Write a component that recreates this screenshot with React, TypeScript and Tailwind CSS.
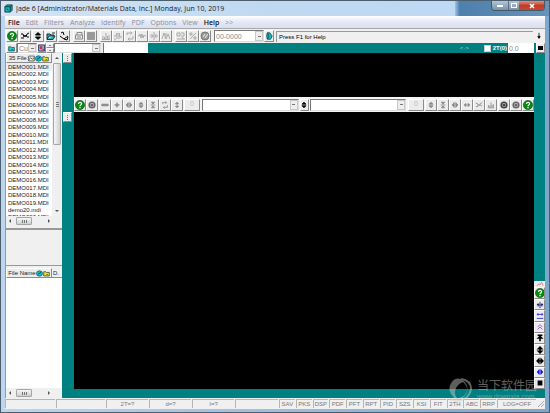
import React from 'react';
import clsx from 'clsx';

interface GlyphProps {
  d: string;
  color?: string;
  size?: string;
}

// 10x10 line glyph shared by every toolbar
const Glyph: React.FC<GlyphProps> = ({ d, color = 'text-black', size = 'size-[10px]' }) => (
  <svg viewBox="0 0 10 10" className={clsx('shrink-0', size, color)} fill="none" stroke="currentColor" aria-hidden="true">
    <path d={d} />
  </svg>
);

const HelpGlyph = () => (
  <svg viewBox="0 0 10 10" className="size-[10px] shrink-0" fill="none" aria-hidden="true">
    <circle cx="5" cy="5" r="4.6" fill="#078a12" stroke="#045008" strokeWidth="0.6" />
    <path d="M3.5 3.9C3.5 1.9 6.6 1.9 6.6 3.8C6.6 5 5 4.9 5 6.2M5 7V8.2" stroke="white" strokeWidth="1.2" />
  </svg>
);

const FolderGlyph = ({ fill }: { fill: string }) => (
  <svg viewBox="0 0 10 10" className="size-[7px] shrink-0" aria-hidden="true">
    <path d="M1 2.5H4L5 3.5H9V8.5H1Z" fill={fill} stroke="#1d3a3a" />
    <path d="M5 6.5H7" stroke="#1d3a3a" />
  </svg>
);

const DiscGlyph = () => (
  <svg viewBox="0 0 10 10" className="size-[7px] shrink-0" aria-hidden="true">
    <ellipse cx="5" cy="5" rx="4.4" ry="3.8" fill="#08c4cf" stroke="#07565f" />
    <path d="M3 6L7 3.5" stroke="#063b50" strokeWidth="1.4" />
  </svg>
);

const PictureGlyph = () => (
  <svg viewBox="0 0 10 10" className="size-[7px] shrink-0" fill="none" aria-hidden="true">
    <path d="M1 1.5H9V8.5H1ZM1 7L4 4L6 6L9 4" stroke="#333" />
  </svg>
);

const glyphs = {
  wave: 'M1 3H3L4 6L5 4L6 6L7 3L9 2M1 7H4M7 6H9',
  updown: 'M2.5 4L5 1.5L7.5 4ZM2.5 6L5 8.5L7.5 6Z',
  print: 'M3 4V1.5H8V4M1.5 4H8.5V8H1.5ZM3 6H7',
  save: 'M1.5 1.5H8.5V8.5H1.5ZM2 3H8M2 4.5H8M2 6H8M2 7.5H8',
  peaks: 'M1 8.5H9M2 8V5M3.5 8V6M5 8V2M6.5 8V5M8 8V4',
  peakLeft: 'M1 5H3L4 2V8M6 8V2L7 6H9M1 8H3',
  cycle: 'M2 4V2H7M5.5 0.5L7 2L5.5 3.5M8 5V8H3M4.5 6.5L3 8L4.5 9.5',
  zigzag: 'M1 5H2L3 3L4 7L5 3L6 7L7 4L8 5H9',
  spread: 'M1 5H4L2.5 3M2.5 7L4 5M9 5H6L7.5 3M7.5 7L6 5M5 1V9',
  bell: 'M1 8L3 2L5 8L7 3L9 8M5 2V5',
  search: 'M1 2H4V5H1ZM5 2H8V5H5M1 8H9M6 6L8 8',
  percent: 'M2 8L8 2M2 2H4V4H2ZM6 6H8V8H6Z',
  ring: 'M5 1.5A3.5 3.5 0 1 0 5 8.5A3.5 3.5 0 1 0 5 1.5M5 4A1 1 0 1 0 5 6A1 1 0 1 0 5 4',
  minus: 'M1 4H9V6H1Z',
  plus: 'M2 4.5H8M2 5.5H8M4.5 2V8M5.5 2V8',
  sides: 'M4 2L1.5 5L4 8ZM6 2L8.5 5L6 8Z',
  shrink: 'M3 1.5H7L5 4ZM3 8.5H7L5 6ZM2 5H8',
  top: 'M2 1.5H8M5 9V3M3 5L5 3L7 5Z',
  tall: 'M5 2V8M3 3.5L5 1.5L7 3.5ZM3 6.5L5 8.5L7 6.5Z',
  wide: 'M2 5H8M3.5 3L1.5 5L3.5 7ZM6.5 3L8.5 5L6.5 7Z',
};

const bevel =
  'flex shrink-0 items-center justify-center overflow-hidden border border-t-white border-l-white border-r-[#8b8b8b] border-b-[#8b8b8b] bg-[#ececec]';

interface ToolProps {
  label: string;
  className?: string;
  children?: React.ReactNode;
}

const Tool: React.FC<ToolProps> = ({ label, className = 'h-3 w-3', children }) => (
  <button type="button" aria-label={label} className={clsx(bevel, className)}>
    {children}
  </button>
);

const Combo = ({ label, value = '', className }: { label: string; value?: string; className: string }) => (
  <span className={clsx('relative flex border border-t-[#777] border-l-[#777] border-r-[#ddd] border-b-[#ddd] bg-white', className)}>
    <select aria-label={label} className="w-full appearance-none bg-transparent pl-px text-[7px] leading-none text-[#888] outline-none">
      <option>{value}</option>
    </select>
    <span className="pointer-events-none absolute inset-y-0 right-0 flex w-2 items-center justify-center border border-[#c8c8c8] bg-[#eee]">
      <span className="h-px w-[3px] bg-[#777]" />
    </span>
  </span>
);

const TitleBar = () => (
  <header className="flex h-[15px] shrink-0 items-center bg-linear-to-r from-[#d5e3f2] via-[#bfd9f1] to-[#bcd9f5] pl-[3px]">
    <svg viewBox="0 0 10 10" className="size-[9px] shrink-0" aria-hidden="true">
      <path d="M1 3L3 1H9V7L7 9H1Z" fill="#0fb5b9" stroke="#073f45" />
      <path d="M1 3H7V9M7 3L9 1M3 5L5 7" fill="none" stroke="#073f45" />
    </svg>
    <h1 className="ml-[3px] grow truncate text-[7px] leading-[15px] text-[#16202c]">
      Jade 6 [Administrator/Materials Data, Inc.] Monday, Jun 10, 2019
    </h1>
    <div className="flex h-full w-[94px] shrink-0 justify-end bg-linear-to-r from-[#9dc3e8] via-[#4d80ad] via-5% to-[#6793b7] pr-1">
      <div className="flex h-[10px] overflow-hidden rounded-b-sm border border-t-0 border-[#44586b]">
        <button type="button" aria-label="Minimize" className="flex w-[17px] items-end justify-center border-r border-[#5b7087] bg-linear-to-b from-[#b5c6d5] to-[#7892aa] pb-[3px]">
          <span className="h-[2px] w-[6px] bg-white" />
        </button>
        <button type="button" aria-label="Maximize" className="flex w-[10px] items-center justify-center bg-linear-to-b from-[#b5c6d5] to-[#7892aa]">
          <span className="h-[5px] w-[6px] border border-white" />
        </button>
        <button type="button" aria-label="Close" className="flex w-[25px] items-center justify-center bg-linear-to-b from-[#dd9183] via-[#c43b25] to-[#c04a30]">
          <Glyph d="M2.5 2.5L7.5 7.5M7.5 2.5L2.5 7.5" color="text-white stroke-2" size="size-2" />
        </button>
      </div>
    </div>
  </header>
);

const menus = ['File', 'Edit', 'Filters', 'Analyze', 'Identify', 'PDF', 'Options', 'View', 'Help', '>>'];

const MenuBar = () => (
  <nav className="flex h-[12px] shrink-0 items-center gap-[6px] bg-linear-to-b from-white via-[#e4e9f5] to-[#d8dff0] pl-[3px] text-[7px] leading-none">
    {menus.map((menu) => (
      <button
        key={menu}
        type="button"
        className={menu === 'File' || menu === 'Help' ? 'font-semibold text-[#111]' : 'text-[#8b8f98]'}
      >
        {menu}
      </button>
    ))}
  </nav>
);

const disabledTools: [string, string][] = [
  ['Peaks', glyphs.peaks],
  ['Background', glyphs.peakLeft],
  ['Smooth', glyphs.cycle],
  ['Strip', glyphs.zigzag],
  ['Calibrate', glyphs.spread],
  ['Profile fit', glyphs.bell],
];

const MainToolbar = () => (
  <div className="flex h-[15px] shrink-0 items-center border-t border-[#a8a8a8] bg-[#f0f0f0] pl-px font-['Liberation_Sans',sans-serif]">
    <span className="flex gap-px">
      <Tool label="Help"><HelpGlyph /></Tool>
      <Tool label="Pattern"><Glyph d={glyphs.wave} /></Tool>
      <Tool label="Step"><Glyph d={glyphs.updown} color="text-black fill-black" /></Tool>
      <Tool label="Open">
        <svg viewBox="0 0 10 10" className="size-[10px]" aria-hidden="true">
          <path d="M1 8V3H4L5 4H8V5H3L1 8.5H7L9 5H8" fill="#15bcc4" stroke="#173034" />
          <path d="M6 2H9" stroke="#173034" />
        </svg>
      </Tool>
      <Tool label="Read"><Glyph d="M2 2L4 1L5 4M1 5L5 8L9 5M5 8L8 9L9 6" /></Tool>
    </span>
    <span className="flex pl-[3px]">
      <Tool label="Print"><Glyph d={glyphs.print} color="text-[#888]" /></Tool>
      <Tool label="Save"><Glyph d={glyphs.save} color="text-[#999] fill-[#999]" /></Tool>
    </span>
    <span className="flex pl-[3px]">
      {disabledTools.map(([label, d]) => (
        <Tool key={label} label={label}><Glyph d={d} color="text-[#aaa]" /></Tool>
      ))}
    </span>
    <span className="flex px-[3px]">
      <Tool label="Search"><Glyph d={glyphs.search} color="text-[#aaa]" /></Tool>
      <Tool label="Percent"><Glyph d={glyphs.percent} color="text-[#aaa]" /></Tool>
      <Tool label="Retrieve">
        <svg viewBox="0 0 10 10" className="size-[10px]" aria-hidden="true">
          <circle cx="5" cy="5" r="4" fill="#999" stroke="#777" />
          <path d="M3 6L5 3M5 7L8 3" stroke="#eee" />
        </svg>
      </Tool>
    </span>
    <Combo label="PDF number" value="00-0000" className="h-3 w-[50px] shrink-0" />
    <Tool label="Database" className="h-3 w-[10px]">
      <svg viewBox="0 0 10 10" className="size-2" aria-hidden="true">
        <path d="M3 1H6L9 5L7 9H3L2 5Z" fill="#12c2c4" stroke="#073f45" />
        <path d="M3 1L5 5L3 9" fill="none" stroke="#073f45" />
      </svg>
    </Tool>
    <p className="ml-[2px] flex h-[11px] grow items-center border-t border-l border-[#999] pl-[2px] text-[6px] leading-none text-black">
      Press F1 for Help
    </p>
    <button type="button" aria-label="Collapse" className="flex h-3 w-3 items-center justify-center">
      <Glyph d="M5 1V6M3.5 5.5L5 8L6.5 5.5Z" color="text-black fill-black" size="size-2" />
    </button>
  </div>
);

const OptionsRow = () => (
  <div className="flex h-[10px] shrink-0 items-center bg-[#008080] font-['Liberation_Sans',sans-serif]">
    <div className="flex h-full items-center bg-[#ececec] pl-px">
      <Tool label="Files" className="h-[10px] w-[11px]"><FolderGlyph fill="#19cbd3" /></Tool>
      <Combo label="Anode" value="Cu" className="h-[10px] w-5" />
      <Tool label="Colors" className="h-[10px] w-[9px]">
        <svg viewBox="0 0 8 8" className="size-[8px]" aria-hidden="true">
          <path d="M0.5 0.5H7.5V7.5H0.5Z" fill="#8fb0df" stroke="#24365f" />
          <path d="M2 2H5V5H2ZM5 5H7V7H5Z" fill="#d62836" />
        </svg>
      </Tool>
      <span className="flex w-2 flex-col">
        <Tool label="Up" className="h-[5px] w-2"><i className="h-px w-[2px] bg-[#888]" /></Tool>
        <Tool label="Down" className="h-[5px] w-2"><i className="h-px w-[2px] bg-[#888]" /></Tool>
      </span>
      <Combo label="Scan" className="h-[10px] w-[47px]" />
      <input aria-label="Range" className="ml-[2px] h-[10px] w-[45px] border-l border-[#777] bg-white" />
    </div>
    <div className="flex grow items-center justify-end leading-none text-white">
      <span className="mr-[15px] text-[6px] text-[#a9d8d8]">&lt;·&gt;</span>
      <label className="flex items-center gap-[2px] text-[6px] font-bold">
        <input type="checkbox" className="size-[7px] appearance-none border border-[#ccc] bg-white" />
        2T(0)
      </label>
      <input
        aria-label="Two theta offset"
        defaultValue="0.0"
        className="ml-px h-[10px] w-[26px] bg-white pl-px text-[7px] leading-none text-[#888]"
      />
      <Tool label="Full screen" className="ml-[2px] h-[10px] w-[9px]">
        <span className="h-1 w-[5px] bg-black" />
      </Tool>
    </div>
  </div>
);

const files = [
  ...Array.from({ length: 19 }, (_, i) => `DEMO0${String(i + 1).padStart(2, '0')}.MDI`),
  'demo20.mdi',
];

const HorizontalScroll = () => (
  <div className="flex h-[10px] shrink-0 items-center bg-[#f0f0f0] px-[3px]" aria-hidden="true">
    <span className="border-y-2 border-r-2 border-transparent border-r-[#555]" />
    <span className="ml-[5px] flex h-2 w-4 items-center justify-center gap-px rounded-[1px] border border-[#a5a5a5] bg-linear-to-b from-[#f7f7f7] to-[#cfcfcf]">
      <i className="h-[3px] w-px bg-[#777]" />
      <i className="h-[3px] w-px bg-[#777]" />
      <i className="h-[3px] w-px bg-[#777]" />
    </span>
    <span className="ml-4 border-y-2 border-l-2 border-transparent border-l-[#555]" />
  </div>
);

const FilePanel = () => (
  <aside className="flex w-[57px] shrink-0 flex-col border-l border-[#999] bg-[#f0f0f0] font-['Liberation_Sans',sans-serif] text-[6px] leading-none text-[#222]">
    <div className="flex h-[163px] shrink-0">
      <div className="flex w-[46px] flex-col bg-white">
        <div className={clsx(bevel, 'h-[10px]')}>
          <span className="whitespace-nowrap">35 File:</span>
          <PictureGlyph />
          <DiscGlyph />
          <FolderGlyph fill="#f3e21b" />
        </div>
        <ul className="flex min-h-0 grow flex-col overflow-hidden">
          {files.map((file, i) => (
            <li key={file} className={clsx('flex flex-1 items-center pl-[2px]', i === 0 && 'bg-[#ededed]')}>
              {file}
            </li>
          ))}
          <li className="h-[2px] shrink-0 overflow-hidden pl-[2px]">DEMO020.MDI</li>
        </ul>
      </div>
      <div className="flex grow flex-col items-center justify-between bg-[#f0f0f0] pb-1" aria-hidden="true">
        <span className="mt-1 border-x-2 border-b-2 border-transparent border-b-[#555]" />
        <span className="mt-1 flex w-2 grow flex-col items-center justify-center gap-px rounded-[1px] border border-[#a5a5a5] bg-linear-to-r from-[#f7f7f7] to-[#d0d0d0]">
          <i className="h-px w-[3px] bg-[#777]" />
          <i className="h-px w-[3px] bg-[#777]" />
          <i className="h-px w-[3px] bg-[#777]" />
        </span>
        <span className="mt-[65px] border-x-2 border-t-2 border-transparent border-t-[#555]" />
      </div>
    </div>
    <HorizontalScroll />
    <div className="my-[2px] h-[38px] shrink-0 border-t-2 border-b border-[#999]" />
    <div className="flex h-[10px] shrink-0">
      <div className={clsx(bevel, 'w-[46px]')}>
        <span className="whitespace-nowrap">File Name</span>
        <DiscGlyph />
        <FolderGlyph fill="#f3e21b" />
      </div>
      <div className="flex grow items-center border-b border-[#8b8b8b] pl-px">D.</div>
    </div>
    <div className="grow bg-white" />
    <HorizontalScroll />
  </aside>
);

const leftPlotTools: [string, string][] = [
  ['Less', glyphs.minus],
  ['More', glyphs.plus],
  ['Pan', glyphs.sides],
  ['Scale', glyphs.updown],
  ['Compress', glyphs.shrink],
  ['Rotate', glyphs.cycle],
  ['Stretch', glyphs.tall],
];

const rightPlotTools: [string, string][] = [
  ['Scale', glyphs.updown],
  ['Compress', glyphs.shrink],
  ['Pan', glyphs.sides],
  ['Widen', glyphs.wide],
  ['Wave', glyphs.wave],
  ['Sticks', glyphs.peaks],
];

const PlotToolbar = () => (
  <div className="flex h-[15px] shrink-0 items-center bg-[#f4f4f4] font-['Liberation_Sans',sans-serif]">
    <Tool label="Help"><HelpGlyph /></Tool>
    <Tool label="Target"><Glyph d={glyphs.ring} color="text-[#666] stroke-2" size="size-2" /></Tool>
    <span className="flex px-px">
      {leftPlotTools.map(([label, d]) => (
        <Tool key={label} label={label}>
          <Glyph d={d} color={label === 'Rotate' ? 'text-[#888]' : 'text-[#888] fill-[#888]'} size="size-2" />
        </Tool>
      ))}
    </span>
    <Tool label="Left count" className="h-3 w-4 text-[7px] text-[#bbb]">0</Tool>
    <Combo label="Phase" className="ml-[2px] h-3 min-w-0 flex-1" />
    <Tool label="Swap" className="mx-px h-3 w-[9px]">
      <Glyph d={glyphs.updown} color="text-black fill-black" size="size-2" />
    </Tool>
    <Combo label="Overlay" className="h-3 min-w-0 flex-1" />
    <Tool label="Right count" className="ml-[2px] h-3 w-4 text-[7px] text-[#bbb]">0</Tool>
    <span className="flex px-px">
      {rightPlotTools.map(([label, d]) => (
        <Tool key={label} label={label}>
          <Glyph d={d} color={label === 'Wave' ? 'text-[#888]' : 'text-[#888] fill-[#888]'} size="size-2" />
        </Tool>
      ))}
    </span>
    <Tool label="Target"><Glyph d={glyphs.ring} color="text-[#444] stroke-2" size="size-2" /></Tool>
    <Tool label="Ring"><Glyph d={glyphs.ring} color="text-[#666] stroke-2" size="size-2" /></Tool>
    <Tool label="Help"><HelpGlyph /></Tool>
  </div>
);

const sideTools: [string, string, string][] = [
  ['Cursor', glyphs.spread, 'text-[#10106a] fill-[#10106a]'],
  ['Range', 'M1 3H9M2.5 1.5V4.5M7.5 1.5V4.5M1 8H9', 'text-[#1919d6]'],
  ['Cascade', 'M2 5L5 2L8 5M2 8L5 5L8 8', 'text-[#a32fc4]'],
  ['Top', glyphs.top, 'text-black fill-black stroke-2'],
  ['Vertical', glyphs.tall, 'text-black fill-black stroke-2'],
  ['Horizontal', glyphs.wide, 'text-black fill-black stroke-2'],
  ['Pan', glyphs.sides, 'text-[#1414f0] fill-[#1414f0]'],
  ['Full', 'M3 3H7V7H3Z', 'text-black fill-black stroke-2'],
];

const SideTools = () => (
  <div className="flex w-[11px] shrink-0 flex-col justify-end bg-[#008080] pb-[9px]">
    <div className="flex h-[6px] items-center justify-center bg-[#ececec]">
      <Glyph d="M1 7L4 5L5 6L7 3L9 7" color="text-[#d56a6a]" size="size-2" />
    </div>
    <Tool label="Help" className="h-3"><HelpGlyph /></Tool>
    <div className="flex h-[90px] flex-col">
      {sideTools.map(([label, d, color]) => (
        <Tool key={label} label={label} className="min-h-0 flex-1">
          <Glyph d={d} color={color} size="size-2" />
        </Tool>
      ))}
    </div>
  </div>
);

const Handle = () => (
  <button type="button" aria-label="Resize plot" className={clsx(bevel, 'h-[10px] w-[9px] flex-col gap-px')}>
    <i className="size-px bg-[#777]" />
    <i className="size-px bg-[#777]" />
    <i className="size-px bg-[#777]" />
  </button>
);

const PlotArea = () => (
  <main className="flex min-w-0 grow flex-col">
    <section aria-label="Overview" className="h-11 shrink-0 bg-black" />
    <PlotToolbar />
    <section aria-label="Pattern" className="grow bg-black" />
    <div className="h-[9px] shrink-0 bg-[#008080]" />
  </main>
);

const flags = ['SAV', 'PKS', 'DSP', 'PDF', 'PFT', 'RPT', 'PID', 'SZS', 'KSI', 'FIT', '2TH', 'ABC', 'RRP'];
const cell = 'flex h-[9px] items-center justify-center border-t border-l border-[#b5b5b5]';

const StatusBar = () => (
  <footer className="flex h-[11px] shrink-0 items-center gap-px bg-[#f0f0f0] font-['Liberation_Sans',sans-serif] text-[6px] leading-none text-[#777]">
    <span className={clsx(cell, 'w-[50px]')} />
    <span className={clsx(cell, 'w-[49px]')} />
    <span className={clsx(cell, 'w-[42px]')}>2T=?</span>
    <span className={clsx(cell, 'w-[42px]')}>d=?</span>
    <span className={clsx(cell, 'w-[42px]')}>I=?</span>
    <span className={clsx(cell, 'grow')} />
    <div className="flex w-[217px] shrink-0 gap-px">
      {flags.map((flag) => (
        <span key={flag} className={clsx(cell, 'flex-1')}>{flag}</span>
      ))}
    </div>
    <span className={clsx(cell, 'w-[39px]')}>LOG=OFF</span>
    <svg viewBox="0 0 8 8" className="size-2 shrink-0" aria-hidden="true">
      <path d="M7 1L1 7M7 4L4 7" stroke="#aaa" />
    </svg>
  </footer>
);

const Watermark = () => (
  <div className="pointer-events-none absolute right-[8px] bottom-[7px] flex items-center gap-1 opacity-45">
    <svg viewBox="0 0 24 24" className="size-6" aria-hidden="true">
      <path d="M12 1A9 10 0 0 0 2 16L7 22A11 11 0 0 0 12 1ZM14 4C22 10 17 20 8 20C3 14 8 6 14 4Z" fill="#d0d0d0" fillRule="evenodd" />
      <path d="M1 21C9 25 20 22 22 11C22 6 19 2 12 1" fill="none" stroke="#d0d0d0" strokeWidth="2" />
    </svg>
    <div className="text-[#d0d0d0]">
      <p className="font-['Noto_Sans_CJK_SC',sans-serif] text-[12px] leading-[14px]">当下软件园</p>
      <p className="font-['Liberation_Sans',sans-serif] text-[7px] leading-[10px]">www.downxia.com</p>
    </div>
  </div>
);

const App: React.FC = () => {
  return (
    <div className="flex h-screen flex-col overflow-hidden border border-[#4c5d6e] bg-linear-to-r from-[#bcd6ee] to-[#7fa6cb] font-['Open_Sans','Noto_Sans',sans-serif]">
      <TitleBar />
      <div className="relative mx-1 mb-[3px] flex min-h-0 grow flex-col">
        <MenuBar />
        <MainToolbar />
        <OptionsRow />
        <div className="flex min-h-0 grow">
          <FilePanel />
          <div className="flex w-3 shrink-0 flex-col items-start gap-[49px] bg-[#008080] pl-px">
            <Handle />
            <Handle />
          </div>
          <PlotArea />
          <SideTools />
        </div>
        <StatusBar />
        <Watermark />
      </div>
    </div>
  );
};

export default App;
